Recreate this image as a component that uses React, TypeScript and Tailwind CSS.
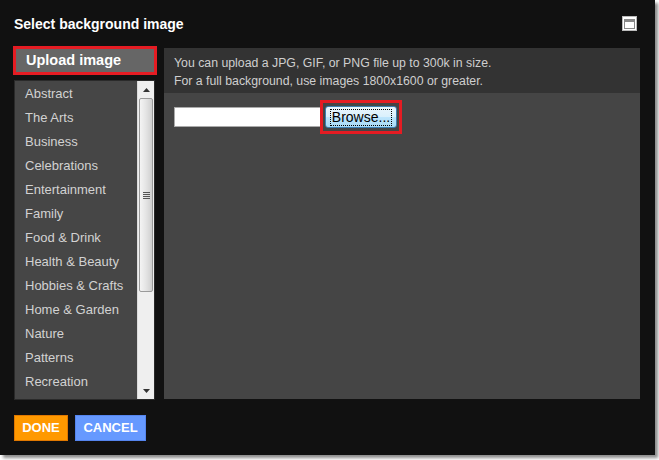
import React from "react";

const cats = [
  "Abstract",
  "The Arts",
  "Business",
  "Celebrations",
  "Entertainment",
  "Family",
  "Food & Drink",
  "Health & Beauty",
  "Hobbies & Crafts",
  "Home & Garden",
  "Nature",
  "Patterns",
  "Recreation",
];

export default function App() {
  return (
    <div className="w-[659px] h-[460px] bg-white relative overflow-hidden" style={{ fontFamily: '"Liberation Sans", Arial, sans-serif' }}>
      <div className="absolute left-0 top-0 w-[655px] h-[455px] bg-[#111111] shadow-[3px_3px_3px_rgba(0,0,0,0.45)] flex flex-col">
        {/* title */}
        <div className="h-[46px] flex items-start pt-[15px] pl-[14px] pr-[18px] justify-between">
          <div className="text-white font-bold text-[14px] leading-[18px]">Select background image</div>
          <div className="w-[15px] h-[15px] bg-white border border-[#bbbbbb] flex items-center justify-center mt-[1px]">
            <div className="w-[11px] h-[10px] border border-[#888888] border-t-[3px]" />
          </div>
        </div>
        <div className="flex h-[354px]">
          {/* left column */}
          <div className="w-[164px] pl-[13px] flex flex-col">
            <div className="w-[144px] h-[29px] border-[3px] border-[#e51c23] bg-[#666666] text-white font-bold text-[14.5px] leading-[23px] pl-[10px]">
              Upload image
            </div>
            <div className="mt-[5px] ml-[1px] w-[141px] h-[320px] bg-[#464646] border border-[#2a2a2a] flex">
              <div className="flex-1 flex flex-col pt-[1px]">
                {cats.map((c) => (
                  <div key={c} className="h-[24px] leading-[24px] pl-[10px] text-[13px] text-[#d2d2d2] whitespace-nowrap">
                    {c}
                  </div>
                ))}
              </div>
              {/* scrollbar */}
              <div className="w-[17px] h-full bg-[#efefef] border-l border-[#dcdcdc] flex flex-col">
                <div className="h-[17px] flex items-center justify-center">
                  <svg width="7" height="4" viewBox="0 0 7 4"><path d="M0 4 L3.5 0 L7 4Z" fill="#333" /></svg>
                </div>
                <div className="mx-[1px] h-[194px] rounded-[2px] border border-[#9a9a9a] bg-[linear-gradient(to_right,#f4f4f4,#e4e4e4_50%,#cfcfcf)] flex items-center justify-center">
                  <div className="flex flex-col gap-[1px]">
                    <div className="w-[7px] h-[1px] bg-[#555]" />
                    <div className="w-[7px] h-[1px] bg-[#555]" />
                    <div className="w-[7px] h-[1px] bg-[#555]" />
                    <div className="w-[7px] h-[1px] bg-[#555]" />
                  </div>
                </div>
                <div className="flex-1" />
                <div className="h-[17px] flex items-center justify-center">
                  <svg width="7" height="4" viewBox="0 0 7 4"><path d="M0 0 L3.5 4 L7 0Z" fill="#333" /></svg>
                </div>
              </div>
            </div>
          </div>
          {/* right panel */}
          <div className="w-[476px] mt-[2px] h-[351px] bg-[#454545] flex flex-col">
            <div className="h-[45px] bg-[#333333] pl-[10px] pt-[6px] text-[12.3px] leading-[18px] text-[#cfcfcf]">
              <div>You can upload a JPG, GIF, or PNG file up to 300k in size.</div>
              <div>For a full background, use images 1800x1600 or greater.</div>
            </div>
            <div className="flex items-center pl-[10px] pt-[7px]">
              <div className="w-[148px] h-[20px] bg-white border border-[#aaa]" />
              <div className="-ml-[2px] w-[82px] h-[34px] border-[3px] border-[#e51c23] flex items-center justify-center">
                <div className="w-[72px] h-[22px] rounded-[3px] border border-[#3c7fb1] bg-[linear-gradient(to_bottom,#eaf6fd,#d9f0fc_50%,#bee6fd_50%,#a7d9f5)] flex items-center justify-center">
                  <div className="border border-dotted border-black px-[1px] text-[14px] leading-[15px] text-black">Browse...</div>
                </div>
              </div>
            </div>
          </div>
        </div>
        {/* buttons */}
        <div className="flex gap-[7px] pl-[14px] mt-[15px]">
          <div className="w-[54px] h-[26px] bg-[#ff9900] border border-[#e07800] text-white font-bold text-[13px] flex items-center justify-center">DONE</div>
          <div className="w-[71px] h-[26px] bg-[#6699ff] border border-[#5585ee] text-white font-bold text-[13px] flex items-center justify-center">CANCEL</div>
        </div>
      </div>
    </div>
  );
}
